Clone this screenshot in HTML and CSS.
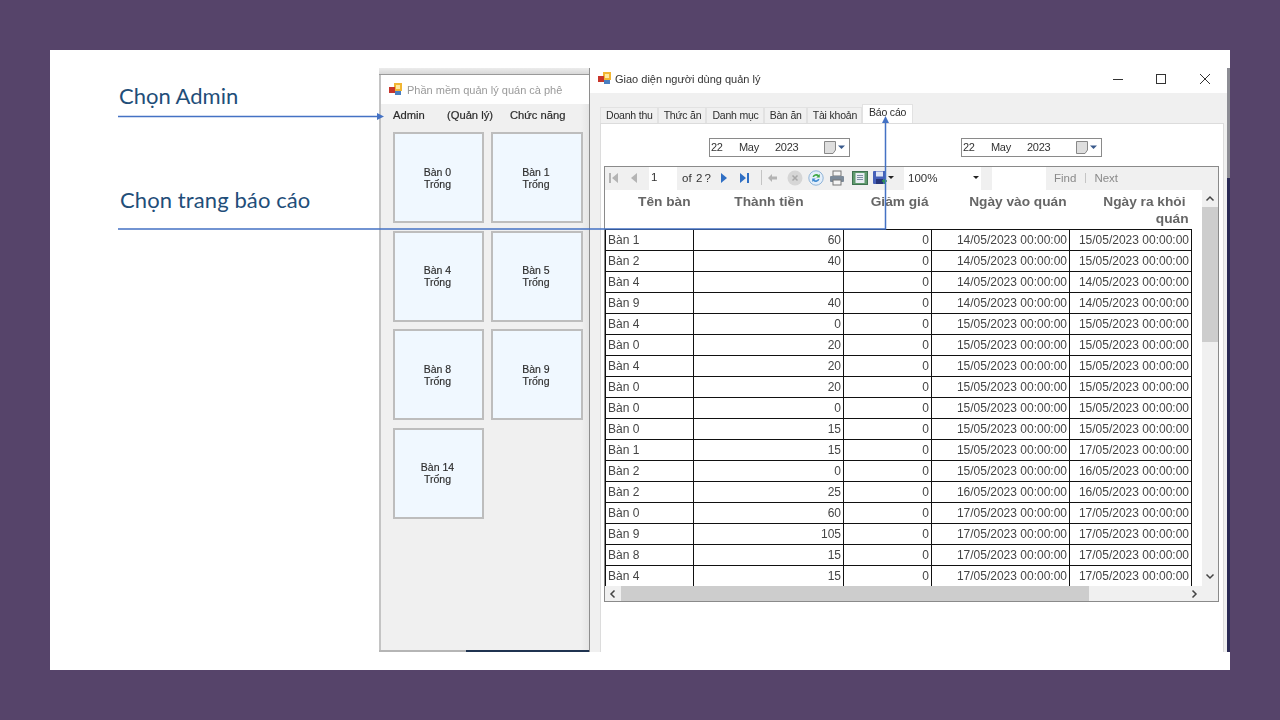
FILE: index.html
```html
<!DOCTYPE html>
<html lang="en">
<head>
    <meta charset="UTF-8">
    <meta name="viewport" content="width=device-width, initial-scale=1.0">
    <title>Chọn trang báo cáo</title>
    <link rel="stylesheet" href="styles.css">
</head>
<body>
    <main class="slide">
        <p class="note note-admin">Chọn Admin</p>
        <p class="note note-report">Chọn trang báo cáo</p>

        <!-- Left window: table list -->
        <section class="win win-tables">
            <div class="win-top"></div>
            <div class="title-left">
                <svg class="app-icon" viewBox="0 0 13 13"><rect x="5" y="0" width="8" height="8" fill="#f2b632"/><rect x="0" y="4" width="6" height="6" fill="#c8352b"/><rect x="6" y="8" width="6" height="4" fill="#4a7fc1"/><rect x="7" y="2" width="4" height="4" fill="#ffe9a0"/></svg>
                <span>Phần mềm quản lý quán cà phê</span>
            </div>
            <nav class="menu">
                <span>Admin</span>
                <span>(Quản lý)</span>
                <span>Chức năng</span>
            </nav>
            <div class="table-grid">
                <button class="tbl">Bàn 0<br>Trống</button>
                <button class="tbl">Bàn 1<br>Trống</button>
                <button class="tbl">Bàn 4<br>Trống</button>
                <button class="tbl">Bàn 5<br>Trống</button>
                <button class="tbl">Bàn 8<br>Trống</button>
                <button class="tbl">Bàn 9<br>Trống</button>
                <button class="tbl">Bàn 14<br>Trống</button>
            </div>
            <div class="win-bottom"></div>
        </section>

        <!-- Right window: manager -->
        <section class="win win-admin">
            <div class="title-right">
                <svg class="app-icon" viewBox="0 0 13 13"><rect x="5" y="0" width="8" height="8" fill="#f2b632"/><rect x="0" y="4" width="6" height="6" fill="#c8352b"/><rect x="6" y="8" width="6" height="4" fill="#4a7fc1"/><rect x="7" y="2" width="4" height="4" fill="#ffe9a0"/></svg>
                <span class="title-text">Giao diện người dùng quản lý</span>
                <svg class="win-btn" viewBox="0 0 100 20">
                    <path d="M0 10.500H10" stroke="#333" fill="none"/>
                    <rect x="43.500" y="5.500" width="9" height="9" stroke="#333" fill="none"/>
                    <path d="M87 5L97 15M97 5L87 15" stroke="#333" fill="none"/>
                </svg>
            </div>
            <div class="win-body">
                <div class="tabs">
                    <span class="tab">Doanh thu</span>
                    <span class="tab">Thức ăn</span>
                    <span class="tab">Danh mục</span>
                    <span class="tab">Bàn ăn</span>
                    <span class="tab">Tài khoản</span>
                    <span class="tab tab-on">Báo cáo</span>
                </div>
                <div class="tab-page">
                    <div class="dates">
                        <div class="date">
                            <span class="d-day">22</span><span class="d-mon">May</span><span class="d-year">2023</span>
                            <svg class="cal" viewBox="0 0 22 13"><path d="M0.500 0.500H11.500V9L9 12.500H0.500z" fill="#dedede" stroke="#888"/><path d="M14 4.500h7l-3.500 3.500z" fill="#3a5a8c"/></svg>
                        </div>
                        <div class="date">
                            <span class="d-day">22</span><span class="d-mon">May</span><span class="d-year">2023</span>
                            <svg class="cal" viewBox="0 0 22 13"><path d="M0.500 0.500H11.500V9L9 12.500H0.500z" fill="#dedede" stroke="#888"/><path d="M14 4.500h7l-3.500 3.500z" fill="#3a5a8c"/></svg>
                        </div>
                    </div>
                    <div class="viewer">
                        <div class="toolbar">
                            <svg class="tool-nav" viewBox="0 0 12 12"><path d="M2 1h2v10H2zM11 1v10L5 6z" fill="#b4b4b4"/></svg>
                            <svg class="tool-prev" viewBox="0 0 12 12"><path d="M9 1v10L3 6z" fill="#b4b4b4"/></svg>
                            <span class="page-box">1</span>
                            <span class="page-of">of&nbsp; 2 ?</span>
                            <svg class="tool-next" viewBox="0 0 12 12"><path d="M3 1v10l6-5z" fill="#2f6fc4"/></svg>
                            <svg class="tool-last" viewBox="0 0 12 12"><path d="M1 1v10l6-5zM8 1h2v10H8z" fill="#2f6fc4"/></svg>
                            <span class="tool-sep"></span>
                            <svg class="tool-back" viewBox="0 0 12 12"><path d="M1 6l4-4v2.500h5v3H5V10z" fill="#b4b4b4"/></svg>
                            <svg class="tool-icon t-stop" viewBox="0 0 16 16"><circle cx="8" cy="8" r="7.500" fill="#d6d6d6"/><path d="M5.500 5.500l5 5M10.500 5.500l-5 5" stroke="#a8a8a8" stroke-width="1.500"/></svg>
                            <svg class="tool-icon t-refresh" viewBox="0 0 16 16"><circle cx="8" cy="8" r="7.200" fill="#e4effa" stroke="#8fb4d8"/><path d="M4.500 7a3.800 3.800 0 0 1 6.300-2l1-1v3.500H8.300l1.300-1.300A2.300 2.300 0 0 0 6 7z" fill="#3fa845"/><path d="M11.500 9a3.800 3.800 0 0 1-6.300 2l-1 1V8.500h3.500l-1.300 1.300A2.300 2.300 0 0 0 10 9z" fill="#3f8ad0"/></svg>
                            <svg class="tool-icon t-print" viewBox="0 0 16 16"><rect x="4" y="1" width="8" height="5" fill="#f4f4f4" stroke="#777"/><rect x="1" y="6" width="14" height="6" rx="1" fill="#7c8a99"/><rect x="4" y="10" width="8" height="5" fill="#f4f4f4" stroke="#777"/></svg>
                            <svg class="tool-icon t-layout" viewBox="0 0 16 16"><rect x="0.500" y="1.500" width="15" height="13" fill="#5f9a6d" stroke="#3f7350"/><rect x="3.500" y="3" width="9" height="10" fill="#e8edf2"/><path d="M5 5.500h6M5 7.500h6M5 9.500h6" stroke="#7d8fa3"/></svg>
                            <svg class="tool-save" viewBox="0 0 14 14"><rect x="0" y="0" width="13" height="13" rx="1" fill="#4560b8"/><rect x="3" y="0.500" width="7" height="5" fill="#dfe5f5"/><rect x="3" y="8" width="7" height="5" fill="#26357a"/><path d="M9 10h5M11.500 8v5" stroke="#2f9a3f" stroke-width="1.500"/></svg>
                            <span class="caret caret-save"></span>
                            <span class="zoom-box">100%<span class="caret"></span></span>
                            <span class="find-box"></span>
                            <span class="find">Find</span>
                            <span class="find-sep"></span>
                            <span class="next">Next</span>
                        </div>
                        <div class="report-row">
                            <div class="report">
                                <table class="rep">
                                    <colgroup>
                                        <col class="c1"><col class="c2"><col class="c3"><col class="c4"><col class="c5">
                                    </colgroup>
                                    <thead>
                                        <tr>
                                            <th>Tên bàn</th>
                                            <th class="th-money">Thành tiền</th>
                                            <th>Giảm giá</th>
                                            <th>Ngày vào quán</th>
                                            <th><span class="th-line">Ngày ra khỏi</span><br>quán</th>
                                        </tr>
                                    </thead>
                                    <tbody>
                                        <tr><td>Bàn 1</td><td>60</td><td>0</td><td>14/05/2023 00:00:00</td><td>15/05/2023 00:00:00</td></tr>
                                        <tr><td>Bàn 2</td><td>40</td><td>0</td><td>14/05/2023 00:00:00</td><td>15/05/2023 00:00:00</td></tr>
                                        <tr><td>Bàn 4</td><td></td><td>0</td><td>14/05/2023 00:00:00</td><td>14/05/2023 00:00:00</td></tr>
                                        <tr><td>Bàn 9</td><td>40</td><td>0</td><td>14/05/2023 00:00:00</td><td>14/05/2023 00:00:00</td></tr>
                                        <tr><td>Bàn 4</td><td>0</td><td>0</td><td>15/05/2023 00:00:00</td><td>15/05/2023 00:00:00</td></tr>
                                        <tr><td>Bàn 0</td><td>20</td><td>0</td><td>15/05/2023 00:00:00</td><td>15/05/2023 00:00:00</td></tr>
                                        <tr><td>Bàn 4</td><td>20</td><td>0</td><td>15/05/2023 00:00:00</td><td>15/05/2023 00:00:00</td></tr>
                                        <tr><td>Bàn 0</td><td>20</td><td>0</td><td>15/05/2023 00:00:00</td><td>15/05/2023 00:00:00</td></tr>
                                        <tr><td>Bàn 0</td><td>0</td><td>0</td><td>15/05/2023 00:00:00</td><td>15/05/2023 00:00:00</td></tr>
                                        <tr><td>Bàn 0</td><td>15</td><td>0</td><td>15/05/2023 00:00:00</td><td>15/05/2023 00:00:00</td></tr>
                                        <tr><td>Bàn 1</td><td>15</td><td>0</td><td>15/05/2023 00:00:00</td><td>17/05/2023 00:00:00</td></tr>
                                        <tr><td>Bàn 2</td><td>0</td><td>0</td><td>15/05/2023 00:00:00</td><td>16/05/2023 00:00:00</td></tr>
                                        <tr><td>Bàn 2</td><td>25</td><td>0</td><td>16/05/2023 00:00:00</td><td>16/05/2023 00:00:00</td></tr>
                                        <tr><td>Bàn 0</td><td>60</td><td>0</td><td>17/05/2023 00:00:00</td><td>17/05/2023 00:00:00</td></tr>
                                        <tr><td>Bàn 9</td><td>105</td><td>0</td><td>17/05/2023 00:00:00</td><td>17/05/2023 00:00:00</td></tr>
                                        <tr><td>Bàn 8</td><td>15</td><td>0</td><td>17/05/2023 00:00:00</td><td>17/05/2023 00:00:00</td></tr>
                                        <tr><td>Bàn 4</td><td>15</td><td>0</td><td>17/05/2023 00:00:00</td><td>17/05/2023 00:00:00</td></tr>
                                    </tbody>
                                </table>
                            </div>
                            <div class="vscroll">
                                <svg class="sb-arrow" viewBox="0 0 16 16"><path d="M4.500 9.500L8 6l3.500 3.500" stroke="#444" stroke-width="1.500" fill="none"/></svg>
                                <div class="v-track"><div class="v-thumb"></div></div>
                                <svg class="sb-arrow" viewBox="0 0 16 16"><path d="M4.500 6.500L8 10l3.500-3.500" stroke="#444" stroke-width="1.500" fill="none"/></svg>
                            </div>
                        </div>
                        <div class="hscroll">
                            <svg class="sb-arrow" viewBox="0 0 16 16"><path d="M9.500 4.500L6 8l3.500 3.500" stroke="#444" stroke-width="1.500" fill="none"/></svg>
                            <div class="h-track"><div class="h-thumb"></div></div>
                            <svg class="sb-arrow" viewBox="0 0 16 16"><path d="M6.500 4.500L10 8l-3.500 3.500" stroke="#444" stroke-width="1.500" fill="none"/></svg>
                        </div>
                    </div>
                </div>
            </div>
        </section>
        <div class="win-edge"></div>

        <!-- Callout arrows over the screenshots -->
        <svg class="arrows" viewBox="0 0 1180 620">
            <path d="M68 66.500H328" stroke="#4472c4" stroke-width="1.500" fill="none"/>
            <path d="M334 66.500l-7-3.500v7z" fill="#4472c4"/>
            <path d="M68 179H835.500V73" stroke="#4472c4" stroke-width="1.500" fill="none"/>
            <path d="M835.500 66l-3.500 7h7z" fill="#4472c4"/>
        </svg>
    </main>
</body>
</html>
```
FILE: styles.css
```css
html, body {
    margin: 0;
    padding: 0;
}
body {
    width: 1280px;
    height: 720px;
    overflow: hidden;
    background: #56446a;
    display: flex;
    align-items: center;
    justify-content: center;
    font-family: "Liberation Sans", Arial, sans-serif;
}
.slide {
    position: relative;
    width: 1180px;
    height: 620px;
    background: #fff;
    overflow: hidden;
}
.note {
    position: absolute;
    left: 69px;
    margin: 0;
    font-family: Lato, "Open Sans", sans-serif;
    font-size: 22px;
    line-height: 28px;
    color: #1f4e79;
}
.note-admin { top: 32px; }
.note-report {
    top: 136px;
    left: 70px;
    letter-spacing: 0.1px;
}

/* windows sit on the slide like on a desktop, the source was a scaled screenshot so a touch soft */
.win {
    position: absolute;
    top: 18px;
    filter: blur(0.35px);
}
.win-tables {
    left: 329px;
    width: 211px;
    height: 584px;
    background: linear-gradient(to right, #f0f0f0 200px, #e4e4e4 209px);
    display: flex;
    flex-direction: column;
    box-sizing: border-box;
    border-left: 2px solid #c4c4c4;
    border-right: 1px solid #8e8e8e;
}
.win-top {
    height: 7px;
    margin-left: -2px;
    background: linear-gradient(to bottom, #ececec, #d8d8d8);
    border-bottom: 1px solid #9a9a9a;
    box-sizing: border-box;
}
.title-left {
    height: 29px;
    background: #fff;
    display: flex;
    align-items: center;
    gap: 5px;
    padding-left: 8px;
    font-size: 11px;
    color: #9a9a9a;
}
.app-icon {
    width: 13px;
    height: 13px;
    flex: none;
}
.menu {
    height: 21px;
    padding-left: 12px;
    display: flex;
    align-items: center;
    font-size: 11.200px;
    color: #2c2c2c;
    -webkit-text-stroke: 0.2px #2c2c2c;
}
.menu span:nth-child(1) { width: 54px; }
.menu span:nth-child(2) { width: 63px; }
.table-grid {
    display: grid;
    grid-template-columns: 91px 92px;
    grid-auto-rows: 91px;
    column-gap: 7px;
    row-gap: 7.670px;
    padding: 7px 0 0 12px;
    flex: 1;
}
.tbl {
    box-sizing: border-box;
    padding: 0 2px 0 0;
    background: #f0f8ff;
    border: 2px solid #bdbdbd;
    font-family: "Liberation Sans", Arial, sans-serif;
    font-size: 10.500px;
    line-height: 12px;
    color: #2c2c2c;
    -webkit-text-stroke: 0.15px #2c2c2c;
}
.win-bottom {
    height: 2px;
    margin-left: -2px;
    background: linear-gradient(to right, #b5b5b5 87px, #1f3350 87px);
}

.win-admin {
    left: 540px;
    width: 637px;
    height: 584px;
    background: #fff;
    display: flex;
    flex-direction: column;
}
.win-edge {
    position: absolute;
    top: 18px;
    left: 1177px;
    width: 3px;
    height: 584px;
    background: linear-gradient(to bottom, #8c8c94 110px, #2b2a55 110px);
}
.title-right {
    height: 25px;
    box-sizing: border-box;
    padding: 0 14px 4px 8px;
    display: flex;
    align-items: center;
    gap: 4px;
    font-size: 11px;
    color: #333;
}
.title-text { flex: 1; }
.win-btn {
    width: 100px;
    height: 20px;
}
.win-body {
    flex: 1;
    background: #f0f0f0;
    padding: 11px 3px 0 10px;
    display: flex;
    flex-direction: column;
    min-height: 0;
}
.tabs {
    display: flex;
    align-items: flex-end;
    height: 19px;
    font-size: 10.500px;
    color: #2c2c2c;
}
.tab {
    box-sizing: border-box;
    height: 16px;
    padding: 1px 4px 0 5px;
    border: 1px solid #e2e2e2;
    border-bottom: none;
    background: #f0f0f0;
    white-space: nowrap;
    letter-spacing: -0.200px;
}
.tab-on {
    height: 19px;
    background: #fff;
    padding: 1px 6px 0 6px;
}
.tab-page {
    flex: 1;
    background: #fff;
    border: 1px solid #dcdcdc;
    border-bottom: none;
    min-height: 0;
}
.dates {
    display: flex;
    gap: 111px;
    padding: 14px 0 0 108px;
}
.date {
    box-sizing: border-box;
    width: 141px;
    height: 19px;
    border: 1px solid #8a8a8a;
    display: flex;
    align-items: center;
    padding: 0 0 1px 1px;
    font-size: 11px;
    letter-spacing: -0.300px;
    color: #333;
}
.d-day { width: 28px; }
.d-mon { width: 36px; }
.d-year { width: 49px; }
.cal {
    width: 22px;
    height: 13px;
}
.viewer {
    box-sizing: border-box;
    width: 615px;
    height: 436px;
    margin: 9px 0 0 3px;
    border: 1px solid #8a8a8a;
    display: flex;
    flex-direction: column;
}
.toolbar {
    height: 23px;
    flex: none;
    background: #f0f0f0;
    display: flex;
    align-items: center;
    font-size: 11.500px;
    color: #333;
    padding-left: 2px;
}
.toolbar svg,
.page-of,
.find,
.next,
.caret-save {
    margin-bottom: 2px;
}
.tool-nav, .tool-prev, .tool-next, .tool-last, .tool-back {
    width: 12px;
    height: 12px;
    flex: none;
}
.tool-prev { margin-left: 9px; }
.page-box {
    width: 26px;
    height: 23px;
    line-height: 21px;
    background: #fff;
    padding-left: 2px;
    margin-left: 9px;
}
.page-of {
    width: 36px;
    margin-left: 5px;
    word-spacing: -1px;
}
.tool-last { margin-left: 9px; }
.tool-sep {
    width: 1px;
    height: 15px;
    background: #c4c4c4;
    margin: 0 5px 2px 10px;
}
.tool-icon {
    width: 16px;
    height: 16px;
    flex: none;
}
.t-stop { margin-left: 8px; }
.t-refresh { margin-left: 5px; }
.t-print { margin-left: 5px; }
.t-layout { margin-left: 7px; }
.tool-save {
    width: 14px;
    height: 14px;
    flex: none;
    margin-left: 5px;
}
.caret {
    width: 0;
    height: 0;
    border-left: 3px solid transparent;
    border-right: 3px solid transparent;
    border-top: 3px solid #222;
}
.caret-save { margin-left: 1px; }
.zoom-box {
    box-sizing: border-box;
    width: 77px;
    height: 23px;
    margin-left: 10px;
    padding: 0 2px 2px 4px;
    background: #fff;
    display: flex;
    align-items: center;
    justify-content: space-between;
}
.find-box {
    width: 54px;
    height: 23px;
    margin-left: 11px;
    background: #fff;
}
.find {
    margin-left: 8px;
    color: #8a8a8a;
}
.find-sep {
    width: 1px;
    height: 10px;
    background: #c4c4c4;
    margin: 0 8px 2px 9px;
}
.next { color: #8a8a8a; }
.report-row {
    flex: 1;
    display: flex;
    min-height: 0;
}
.report {
    flex: 1;
    background: #fff;
    overflow: hidden;
}
.rep {
    border-collapse: collapse;
    table-layout: fixed;
    width: 586px;
    font-size: 12px;
    color: #444;
}
.c1 { width: 88px; }
.c2 { width: 150px; }
.c3 { width: 88px; }
.c4 { width: 138px; }
.c5 { width: 122px; }
.rep th {
    height: 39px;
    box-sizing: border-box;
    padding: 3px 3px 0 0;
    vertical-align: top;
    text-align: right;
    font-size: 13.700px;
    line-height: 17px;
    color: #666;
}
.rep .th-money { padding-right: 40px; }
.th-line { padding-right: 3px; }
.rep td {
    height: 21px;
    padding: 0 2px 0 2px;
    box-sizing: border-box;
    border: 1px solid #111;
    text-align: right;
    white-space: nowrap;
    overflow: hidden;
}
.rep td:first-child { text-align: left; }
.vscroll {
    width: 16px;
    background: #f0f0f0;
    display: flex;
    flex-direction: column;
    flex: none;
    padding: 1px 0 2px;
    box-sizing: border-box;
}
.sb-arrow {
    width: 16px;
    height: 16px;
    flex: none;
}
.v-thumb {
    height: 135px;
    background: #cdcdcd;
}
.v-track { flex: 1; }
.hscroll {
    height: 15px;
    flex: none;
    background: #f0f0f0;
    display: flex;
    align-items: center;
    padding-right: 16px;
}
.h-track {
    flex: 1;
    height: 15px;
}
.h-thumb {
    width: 468px;
    height: 15px;
    background: #cdcdcd;
}
.arrows {
    position: absolute;
    left: 0;
    top: 0;
    width: 1180px;
    height: 620px;
    pointer-events: none;
}
```
